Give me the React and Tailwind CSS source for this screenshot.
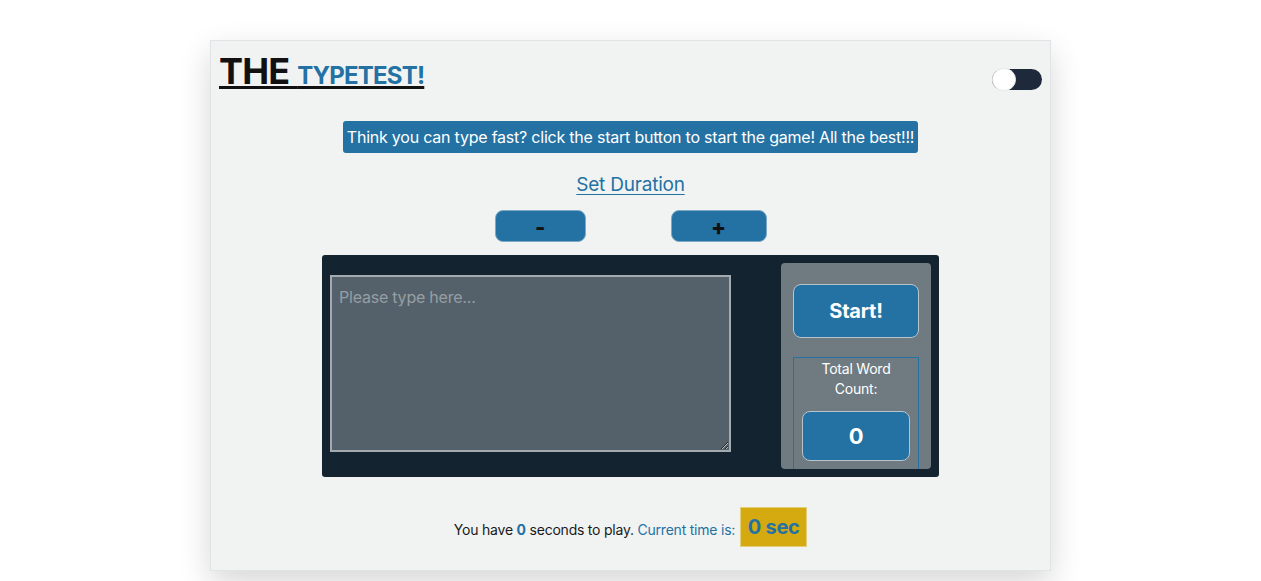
import { useState } from "react";

const App = () => {
  const [text, setText] = useState("");
  const [duration, setDuration] = useState(0);
  const [dark, setDark] = useState(false);

  const wordCount = text.trim() ? text.trim().split(/\s+/).length : 0;

  return (
    <div
      className="min-h-[581px] bg-white pt-[40px] tracking-[-0.22px]"
      style={{ fontFamily: "Inter, 'Noto Sans', sans-serif" }}
    >
      <div className="mx-auto w-[841px] h-[531px] border border-[#e1e4e6] bg-[#f1f3f3] shadow-[0_12px_30px_rgba(0,0,0,0.16)]">
        {/* header */}
        <div className="flex justify-between items-start pl-[8px] pr-[8px] pt-[7px]">
          <h1 className="text-[36px] leading-[46px] font-bold text-[#111] underline decoration-[3px] underline-offset-[2px] tracking-[-0.8px]">
            THE <span className="text-[24px] text-[#2471a3] tracking-[-0.8px]">TYPETEST!</span>
          </h1>
          <button
            type="button"
            onClick={() => setDark(!dark)}
            className="mt-[21px] w-[50px] h-[21px] rounded-full bg-[#1e293b] relative"
          >
            <span className="absolute left-0 top-[-1px] w-[24px] h-[23px] rounded-full bg-white border border-[#e5e7eb]" />
          </button>
        </div>

        {/* banner */}
        <div className="flex justify-center mt-[22px]">
          <p className="bg-[#2471a3] text-white text-[16px] leading-[32px] px-[4px] rounded-[3px]">
            Think you can type fast? click the start button to start the game! All the best!!!
          </p>
        </div>

        {/* duration */}
        <div className="flex justify-center mt-[18px]">
          <a href="#" className="text-[#2471a3] text-[19px] leading-[28px] underline underline-offset-[3px]">
            Set Duration
          </a>
        </div>
        <div className="flex justify-center gap-[85px] mt-[11px]">
          <button
            type="button"
            onClick={() => setDuration(Math.max(0, duration - 10))}
            className="w-[91px] h-[32px] rounded-[8px] bg-[#2471a3] border border-[#7ea9c6] text-[#111] text-[22px] font-extrabold leading-none pt-[2px]"
          >
            -
          </button>
          <button
            type="button"
            onClick={() => setDuration(duration + 10)}
            className="w-[96px] h-[32px] rounded-[8px] bg-[#2471a3] border border-[#7ea9c6] text-[#111] text-[22px] font-extrabold leading-none pt-[2px]"
          >
            +
          </button>
        </div>

        {/* game area */}
        <div className="flex justify-center mt-[13px]">
          <div className="w-[617px] h-[222px] bg-[#132330] rounded-[3px] flex justify-between pl-[8px] pr-[8px] pt-[8px]">
            <textarea
              value={text}
              onChange={(e) => setText(e.target.value)}
              placeholder="Please type here..."
              className="mt-[12px] w-[401px] h-[177px] bg-[#55616a] border-2 border-[#a3abb0] text-white text-[16px] px-[7px] py-[8px] placeholder:text-[#959ea4] outline-none"
            />
            <div className="w-[150px] h-[206px] bg-[#6f7b81] rounded-[4px] flex flex-col items-center pt-[21px]">
              <button
                type="button"
                className="w-[126px] h-[54px] rounded-[8px] bg-[#2471a3] border border-[#b8c4cc] text-white text-[20px] font-bold"
              >
                Start!
              </button>
              <div className="mt-[19px] w-[126px] h-[112px] border border-[#2471a3] border-b-0 flex flex-col items-center">
                <p className="text-white text-[14px] leading-[20px] text-center mt-[1px]">
                  Total Word
                  <br />
                  Count:
                </p>
                <div className="mt-[12px] w-[108px] h-[50px] rounded-[8px] bg-[#2471a3] border border-[#b8c4cc] flex items-center justify-center text-white text-[22px] font-bold">
                  {wordCount}
                </div>
              </div>
            </div>
          </div>
        </div>

        {/* footer */}
        <div className="flex justify-center items-center mt-[30px] text-[14px] text-[#1a1a1a]">
          <span className="pt-[5px]">
            You have <b className="text-[#2471a3]">{duration}</b> seconds to play.{" "}
            <span className="text-[#2471a3]">Current time is:</span>
          </span>
          <span className="ml-[5px] w-[67px] h-[40px] bg-[#d4aa10] border border-[#e3cf7a] text-[#2471a3] text-[20px] font-bold flex items-center justify-center">
            0 sec
          </span>
        </div>
      </div>
    </div>
  );
};

export default App;
